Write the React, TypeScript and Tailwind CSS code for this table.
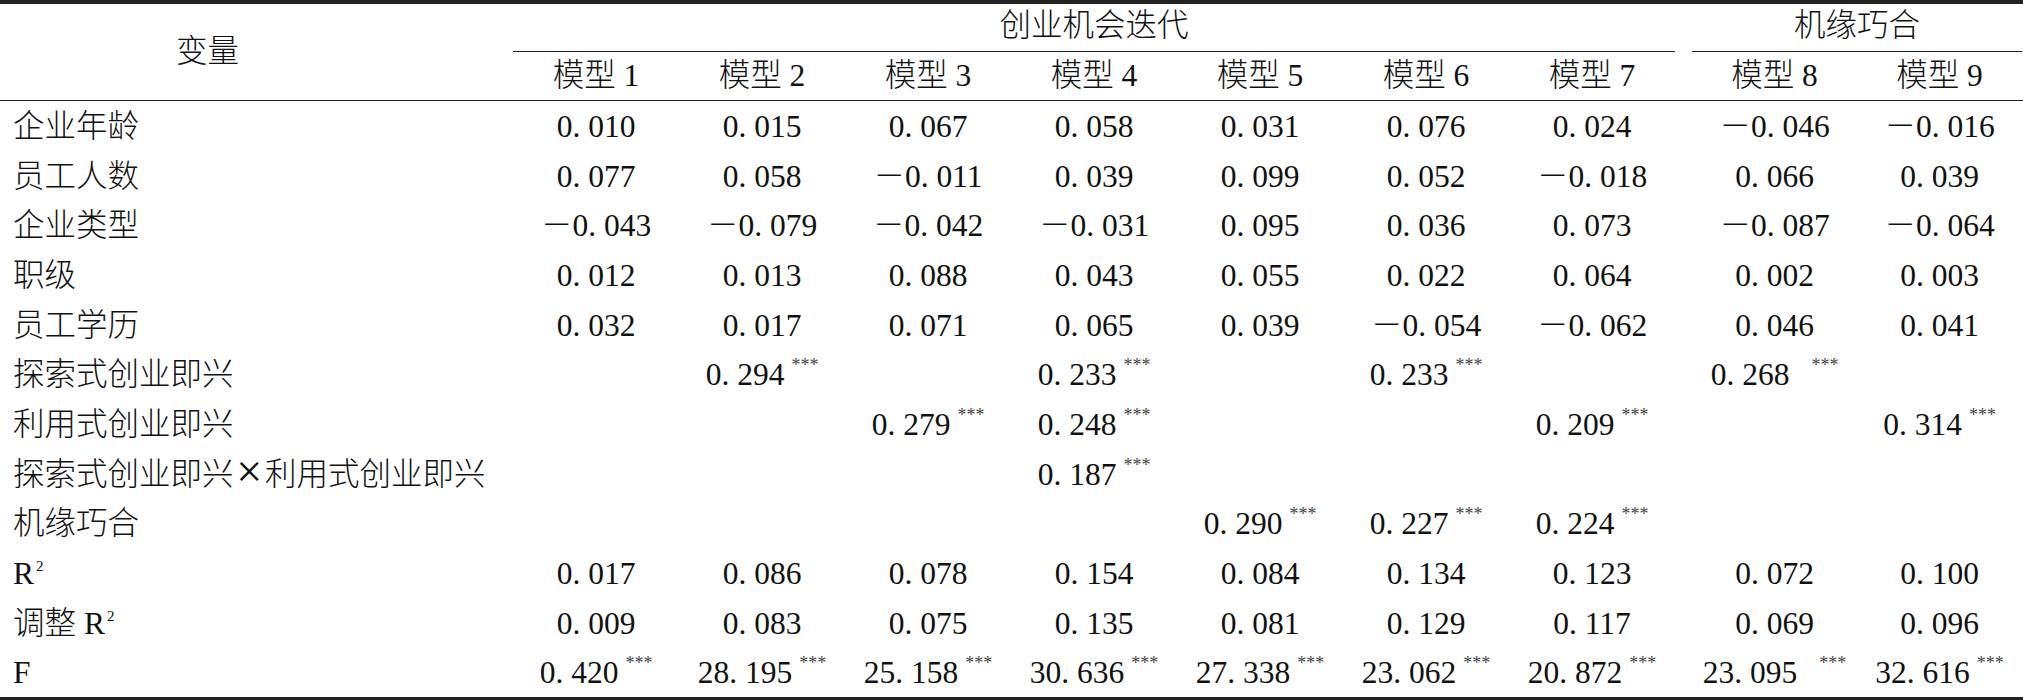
import React from 'react';

type Cell = string | { v: string; s?: boolean; wide?: boolean };

const groupCols = 'grid grid-cols-[513px_repeat(7,166px)_17px_165px_165px]';

const rows: { label: React.ReactNode; cells: Cell[] }[] = [
  { label: '企业年龄', cells: ['0.010', '0.015', '0.067', '0.058', '0.031', '0.076', '0.024', '－0.046', '－0.016'] },
  { label: '员工人数', cells: ['0.077', '0.058', '－0.011', '0.039', '0.099', '0.052', '－0.018', '0.066', '0.039'] },
  { label: '企业类型', cells: ['－0.043', '－0.079', '－0.042', '－0.031', '0.095', '0.036', '0.073', '－0.087', '－0.064'] },
  { label: '职级', cells: ['0.012', '0.013', '0.088', '0.043', '0.055', '0.022', '0.064', '0.002', '0.003'] },
  { label: '员工学历', cells: ['0.032', '0.017', '0.071', '0.065', '0.039', '－0.054', '－0.062', '0.046', '0.041'] },
  {
    label: '探索式创业即兴',
    cells: ['', { v: '0.294', s: true }, '', { v: '0.233', s: true }, '', { v: '0.233', s: true }, '', { v: '0.268', s: true, wide: true }, ''],
  },
  {
    label: '利用式创业即兴',
    cells: ['', '', { v: '0.279', s: true }, { v: '0.248', s: true }, '', '', { v: '0.209', s: true }, '', { v: '0.314', s: true }],
  },
  {
    label: (
      <>
        探索式创业即兴
        <span className="relative top-[2px] inline-block w-[31.5px] text-center text-[46px] leading-[0]">×</span>
        利用式创业即兴
      </>
    ),
    cells: ['', '', '', { v: '0.187', s: true }, '', '', '', '', ''],
  },
  {
    label: '机缘巧合',
    cells: ['', '', '', '', { v: '0.290', s: true }, { v: '0.227', s: true }, { v: '0.224', s: true }, '', ''],
  },
  {
    label: (
      <>
        R<Sup2 />
      </>
    ),
    cells: ['0.017', '0.086', '0.078', '0.154', '0.084', '0.134', '0.123', '0.072', '0.100'],
  },
  {
    label: (
      <>
        调整 R<Sup2 />
      </>
    ),
    cells: ['0.009', '0.083', '0.075', '0.135', '0.081', '0.129', '0.117', '0.069', '0.096'],
  },
  {
    label: 'F',
    cells: [
      { v: '0.420', s: true },
      { v: '28.195', s: true },
      { v: '25.158', s: true },
      { v: '30.636', s: true },
      { v: '27.338', s: true },
      { v: '23.062', s: true },
      { v: '20.872', s: true },
      { v: '23.095', s: true, wide: true },
      { v: '32.616', s: true },
    ],
  },
];

function Sup2() {
  return <span className="relative -top-[13px] ml-[2px] text-[15px]">2</span>;
}

function Num({ cell }: { cell: Cell }) {
  if (cell === '') return <div />;
  const c = typeof cell === 'string' ? { v: cell } : cell;
  const neg = c.v.startsWith('－');
  const body = neg ? c.v.slice(1) : c.v;
  const [a, b] = body.split('.');
  return (
    <div className="flex items-center justify-center whitespace-nowrap">
      <span>
        {neg && <span className="inline-block w-[1em] text-center">－</span>}
        {a}
        <span className="inline-block w-[0.5em] text-left">.</span>
        {b}
        {c.s && (
          <span
            className={`relative -top-[14px] text-[18px] text-[#444] ${c.wide ? 'ml-[22px]' : 'ml-[7px]'}`}
          >
            ***
          </span>
        )}
      </span>
    </div>
  );
}

export default function App() {
  return (
    <div className="w-[2023px] h-[700px] bg-white text-[#111] text-[31.5px] leading-none font-light font-['Liberation_Serif','Noto_Sans_CJK_SC',serif]">
      <div className="h-[4px] bg-[#222]" />
      <div className={`${groupCols} grid-rows-[48px_48px]`}>
        <div className="row-span-2 flex items-center">
          <div className="w-[415px] text-center">变量</div>
        </div>
        <div className="col-span-7 flex items-center justify-center border-b border-[#222] pb-[3px]">
          创业机会迭代
        </div>
        <div />
        <div className="col-span-2 flex items-center justify-center border-b border-[#222] pb-[3px]">
          机缘巧合
        </div>
        {[1, 2, 3, 4, 5, 6, 7].map((n) => (
          <div key={n} className="flex items-center justify-center">
            模型 {n}
          </div>
        ))}
        <div />
        {[8, 9].map((n) => (
          <div key={n} className="flex items-center justify-center">
            模型 {n}
          </div>
        ))}
      </div>
      <div className="h-px bg-[#222]" />
      <div className="flex flex-col">
        {rows.map((r, i) => (
          <div key={i} className={`${groupCols} h-[49.67px] items-center pt-[2px]`}>
            <div className="pl-[13px] whitespace-nowrap">{r.label}</div>
            {r.cells.slice(0, 7).map((c, j) => (
              <Num key={j} cell={c} />
            ))}
            <div />
            {r.cells.slice(7).map((c, j) => (
              <Num key={j + 7} cell={c} />
            ))}
          </div>
        ))}
      </div>
      <div className="h-[4px] bg-[#222]" />
    </div>
  );
}
